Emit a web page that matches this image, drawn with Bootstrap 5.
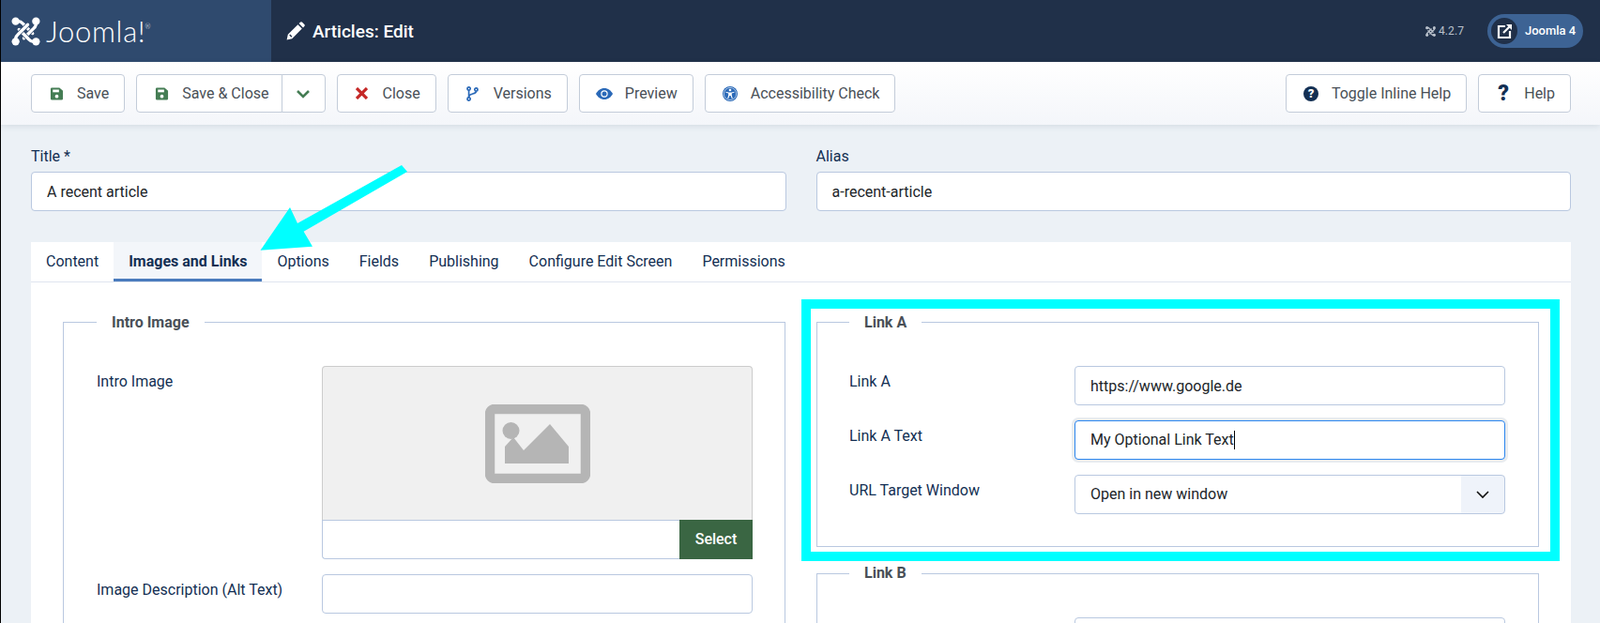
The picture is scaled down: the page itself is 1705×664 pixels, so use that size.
<!DOCTYPE html>
<html lang="en">
  <head>
    <meta charset="UTF-8" />
    <meta name="viewport" content="width=device-width, initial-scale=1.0" />
    <title>Articles: Edit</title>
    <link
      href="https://cdn.jsdelivr.net/npm/bootstrap@5.3.2/dist/css/bootstrap.min.css"
      rel="stylesheet"
    />
    <style>
      html, body { height: 664px; overflow: hidden; }
      body {
        position: relative;
        border-left: 1px solid #000;
        background: #ecf1f6;
        font-family: Roboto, "Liberation Sans", sans-serif;
        font-size: 16px;
        color: #132f53;
      }

      /* header */
      .top-bar { height: 66px; background: #203049; color: #fff; }
      .brand-box { width: 288px; background: #2f4a6e; padding-left: 11px; }
      .brand-name { font-family: Lato, sans-serif; font-weight: 300; font-size: 31px; line-height: 1; margin-left: 6px; letter-spacing: .7px; }
      .brand-name sup { font-size: 7px; top: -1.9em; letter-spacing: 0; margin-left: -1px; }
      .page-title { font-size: 19px; font-weight: 500; margin: 0 0 0 8px; line-height: 1; }
      .title-box { padding-left: 16px; }
      .ver-info { font-size: 12px; color: #b9c1cc; margin-right: 25px; gap: 3px; letter-spacing: .1px; }
      .site-pill { width: 102px; height: 36px; border-radius: 18px; background: #3d6394; padding-left: 4px; margin-right: 18px; font-size: 13px; font-weight: 500; color: #fff; }
      .site-pill-ico { width: 28px; height: 28px; border-radius: 50%; background: #203049; margin-right: 8px; }

      /* toolbar */
      .tool-bar {
        height: 67px;
        padding: 13px 31px 0 32px;
        background: linear-gradient(#fff, #f4f6fa);
        box-shadow: 0 2px 6px rgba(60, 80, 110, .12);
        position: relative;
      }
      .tool-group { gap: 12px; }
      .tool-btn {
        height: 41px;
        display: inline-flex;
        align-items: center;
        padding: 0 16px 0 0;
        border: 1px solid #c3ccd9;
        border-radius: 4px;
        background: #fff;
        color: #495057;
        font-size: 16px;
        line-height: 1;
      }
      .tool-main { padding-right: 13px; }
      .tool-ico { width: 32px; margin-left: 10px; margin-right: 6px; display: flex; justify-content: center; align-items: center; }
      .tool-caret { width: 47px; padding: 0; justify-content: center; }
      .round-q { width: 16px; height: 16px; border-radius: 50%; background: #132f53; color: #fff; font-size: 13px; font-weight: 900; line-height: 16px; text-align: center; }
      .big-q { font-size: 23px; font-weight: 900; color: #132f53; line-height: 1; }

      /* form */
      .main-area { padding: 21.7px 31px 0 32px; }
      .head-row { --bs-gutter-x: 32px; }
      .fld-label { margin: 0 0 4.6px; line-height: 24px; color: #132f53; }
      .fld-input, .fld-select {
        height: 41.7px;
        padding: 0 16px;
        border: 1px solid #b9c8e0;
        border-radius: 4px;
        color: #212529;
        font-size: 16px;
      }
      .fld-focus { display: flex; align-items: center; border-color: #2a85ee; box-shadow: 0 0 0 3px #e9ecef; }
      .fake-caret { border-right: 1px solid #000; height: 20px; display: inline-block; line-height: 20px; }
      .fld-select {
        background: url("data:image/svg+xml,%3csvg xmlns='http://www.w3.org/2000/svg' viewBox='0 0 16 16'%3e%3cpath fill='none' stroke='%23111' stroke-width='1.6' d='M2 5l6 6 6-6'/%3e%3c/svg%3e") no-repeat right 15px center / 16px 16px,
          linear-gradient(#eff3fa, #eff3fa) no-repeat right / 46px 100%, #fff;
      }
      .edit-card { margin-top: 32.7px; background: #fff; }
      .tab-list { height: 43px; border-bottom: 1px solid #dfe5ef; }
      .tab-link { height: 42px; padding: 0 16px; display: flex; align-items: center; color: #132f53; }
      .tab-link:hover { color: #132f53; }
      .tab-on { background: #f3f6fa; font-weight: 700; border-bottom: 3px solid #4a7bbd; padding-top: 3px; }
      .tab-body { padding: 31px 34px 0; }
      .fs-row { --bs-gutter-x: 33px; }
      .fs-box { border: 1px solid #b9c8e0; padding: 0 34px 34px; margin: 0; min-width: 0; }
      .fs-legend { float: none; width: auto; margin: 0; padding: 0 16px; font-size: 16px; line-height: 24px; font-weight: 700; color: #495057; }
      .fs-first { padding-top: 34.5px; }
      .fs-next { margin-top: 16.6px; }
      .fs-left { height: 400px; padding-left: 35px; }
      .form-line { display: flex; margin-bottom: 16.3px; }
      .form-line:last-child { margin-bottom: 0; }
      .line-label { width: 240px; flex: none; margin: 0; padding-top: 4.7px; line-height: 24px; color: #132f53; }
      .line-ctl { width: 459px; flex: none; }
      .media-view { height: 164.3px; background: #f0f0f0; border: 1px solid #ccc; border-bottom: 0; border-radius: 4px 4px 0 0; }
      .media-pick { display: flex; }
      .media-pick .fld-input { flex: 1; border-right: 0; border-radius: 0 0 0 4px; }
      .pick-btn { width: 78px; height: 41.7px; padding: 0; border: 0; border-radius: 0; background: #3a6643; color: #fff; font-size: 16px; font-weight: 500; }
      .pick-btn:hover { background: #3a6643; color: #fff; }

      /* annotation layer */
      .note-layer { position: absolute; left: -1px; top: 0; width: 1705px; height: 664px; pointer-events: none; }
    </style>
  </head>
  <body>
    <header class="top-bar d-flex">
      <div class="brand-box d-flex align-items-center">
        <svg width="31" height="31" viewBox="0 0 30 30">
          <g id="jl-piece" fill="none" stroke-linecap="round">
            <path d="M5 5C9 3 11 6 13 8L22 17" stroke="#2f4a6e" stroke-width="4.600" />
            <path d="M5 5C9 3 11 6 13 8L22 17" stroke="#fff" stroke-width="3.200" />
            <circle cx="4.500" cy="4.500" r="4" fill="#fff" />
          </g>
          <use href="#jl-piece" transform="rotate(90 15 15)" />
          <use href="#jl-piece" transform="rotate(180 15 15)" />
          <use href="#jl-piece" transform="rotate(270 15 15)" />
        </svg>
        <span class="brand-name">Joomla!<sup>®</sup></span>
      </div>
      <div class="title-box flex-grow-1 d-flex align-items-center">
        <svg width="20" height="20" viewBox="0 0 20 20" fill="#fff">
          <path d="M.6 19.4l1.2-5.6L12.4 3.2l4.4 4.4L6.2 18.2zM3.2 14.6l2.2 2.2 1-1-2.2-2.2z" />
          <path d="M13.6 2l1.3-1.3a1.6 1.6 0 0 1 2.2 0l2.2 2.2a1.6 1.6 0 0 1 0 2.2L18 6.4z" />
        </svg>
        <h1 class="page-title">Articles: Edit</h1>
      </div>
      <div class="ver-info d-flex align-items-center">
        <svg width="11" height="11" viewBox="0 0 30 30" fill="none" stroke="#b9c1cc" stroke-width="3.500" stroke-linecap="round">
          <path d="M5 5L9 4L22 17M25 5L26 9L13 22M25 25L21 26L8 13M5 25L4 21L17 8" />
          <g fill="#b9c1cc" stroke="none">
            <circle cx="4.500" cy="4.500" r="4.200" /><circle cx="25.500" cy="4.500" r="4.200" /><circle cx="4.500" cy="25.500" r="4.200" /><circle cx="25.500" cy="25.500" r="4.200" />
          </g>
        </svg>
        <span>4.2.7</span>
      </div>
      <div class="d-flex align-items-center">
        <a class="site-pill d-flex align-items-center text-decoration-none" href="#">
          <span class="site-pill-ico d-flex align-items-center justify-content-center">
            <svg width="17" height="17" viewBox="0 0 17 17" fill="none" stroke="#fff" stroke-width="2.2">
              <path d="M9 3H2v12h12V8" />
              <path d="M7 10l8-8" />
              <path d="M10 1h6v6" fill="#fff" stroke="none" />
            </svg>
          </span>
          Joomla 4
        </a>
      </div>
    </header>

    <div class="tool-bar d-flex justify-content-between">
      <div class="d-flex tool-group">
        <button class="btn tool-btn" type="button">
          <span class="tool-ico">
            <svg width="15" height="16" viewBox="0 0 16 16"><path fill="#457d54" d="M2.5 1H11l4 3.5v9A1.5 1.5 0 0 1 13.500 15h-11A1.500 1.500 0 0 1 1 13.500v-11A1.500 1.500 0 0 1 2.500 1z" /><rect x="3.500" y="3.200" width="7" height="3" fill="#fff" /><circle cx="8" cy="10.800" r="2" fill="#fff" /></svg>
          </span>
          Save
        </button>
        <div class="btn-group">
          <button class="btn tool-btn tool-main" type="button">
            <span class="tool-ico">
              <svg width="15" height="16" viewBox="0 0 16 16"><path fill="#457d54" d="M2.5 1H11l4 3.5v9A1.5 1.5 0 0 1 13.500 15h-11A1.500 1.500 0 0 1 1 13.500v-11A1.500 1.500 0 0 1 2.500 1z" /><rect x="3.500" y="3.200" width="7" height="3" fill="#fff" /><circle cx="8" cy="10.800" r="2" fill="#fff" /></svg>
            </span>
            Save &amp; Close
          </button>
          <button class="btn tool-btn tool-caret" type="button">
            <svg width="14" height="10" viewBox="0 0 14 10" fill="none" stroke="#457d54" stroke-width="2.6"><path d="M1 2l6 6 6-6" /></svg>
          </button>
        </div>
        <button class="btn tool-btn" type="button">
          <span class="tool-ico">
            <svg width="13" height="13" viewBox="0 0 13 13" fill="none" stroke="#c52827" stroke-width="3.200"><path d="M1 1l11 11M12 1L1 12" /></svg>
          </span>
          Close
        </button>
        <button class="btn tool-btn" type="button">
          <span class="tool-ico">
            <svg width="13" height="16" viewBox="0 0 13 16" fill="none" stroke="#2a69b8" stroke-width="1.700"><circle cx="2.600" cy="2.500" r="1.600" /><circle cx="2.600" cy="13.500" r="1.600" /><circle cx="10.400" cy="3.500" r="1.600" /><path d="M2.600 4v8M10.400 5.200c0 3.800-7.800 1.800-7.800 6" /></svg>
          </span>
          Versions
        </button>
        <button class="btn tool-btn" type="button">
          <span class="tool-ico">
            <svg width="18" height="12" viewBox="0 0 18 12"><path fill="#2a69b8" d="M9 0c4 0 7.200 2.600 9 6-1.800 3.400-5 6-9 6S1.800 9.400 0 6c1.800-3.400 5-6 9-6z" /><circle cx="9" cy="6" r="3.700" fill="#fff" /><circle cx="9" cy="6" r="2.500" fill="#2a69b8" /></svg>
          </span>
          Preview
        </button>
        <button class="btn tool-btn" type="button">
          <span class="tool-ico">
            <svg width="16" height="16" viewBox="0 0 16 16"><circle cx="8" cy="8" r="8" fill="#2a69b8" /><circle cx="8" cy="8" r="6.600" fill="none" stroke="#fff" stroke-width=".6" /><circle cx="8" cy="4" r="1.300" fill="#fff" /><path fill="#fff" d="M3.500 5.700l3.100.7h2.800l3.100-.7.200.9-2.900.9v2.100l1 3.400-.9.200L8.600 10h-1.200l-1.300 3.200-.9-.2 1-3.400V7.500l-2.900-.9z" /></svg>
          </span>
          Accessibility Check
        </button>
      </div>
      <div class="d-flex tool-group">
        <button class="btn tool-btn" type="button">
          <span class="tool-ico"><span class="round-q">?</span></span>
          Toggle Inline Help
        </button>
        <button class="btn tool-btn" type="button">
          <span class="tool-ico"><span class="big-q">?</span></span>
          Help
        </button>
      </div>
    </div>

    <main class="main-area">
      <div class="row head-row">
        <div class="col-6">
          <label class="fld-label d-block" for="jform_title">Title *</label>
          <input class="form-control fld-input" id="jform_title" type="text" value="A recent article" />
        </div>
        <div class="col-6">
          <label class="fld-label d-block" for="jform_alias">Alias</label>
          <input class="form-control fld-input" id="jform_alias" type="text" value="a-recent-article" />
        </div>
      </div>

      <div class="edit-card">
        <ul class="nav tab-list">
          <li class="nav-item"><a class="tab-link text-decoration-none" href="#">Content</a></li>
          <li class="nav-item"><a class="tab-link tab-on text-decoration-none" href="#">Images and Links</a></li>
          <li class="nav-item"><a class="tab-link text-decoration-none" href="#">Options</a></li>
          <li class="nav-item"><a class="tab-link text-decoration-none" href="#">Fields</a></li>
          <li class="nav-item"><a class="tab-link text-decoration-none" href="#">Publishing</a></li>
          <li class="nav-item"><a class="tab-link text-decoration-none" href="#">Configure Edit Screen</a></li>
          <li class="nav-item"><a class="tab-link text-decoration-none" href="#">Permissions</a></li>
        </ul>
        <div class="tab-body">
          <div class="row fs-row">
            <div class="col-6">
              <fieldset class="fs-box fs-left">
                <legend class="fs-legend">Intro Image</legend>
                <div class="fs-first">
                  <div class="form-line">
                    <label class="line-label">Intro Image</label>
                    <div class="line-ctl">
                      <div class="media-view d-flex align-items-center justify-content-center">
                        <svg width="112" height="84" viewBox="0 0 112 84">
                          <rect x="5" y="5" width="102" height="74" rx="5" fill="none" stroke="#b5b5b5" stroke-width="10.500" />
                          <ellipse cx="27.500" cy="28" rx="9" ry="9" fill="#b5b5b5" />
                          <path fill="#b5b5b5" d="M21 63V45l9-10 11 14 28-28 20 24v18z" />
                        </svg>
                      </div>
                      <div class="media-pick">
                        <input class="form-control fld-input" type="text" />
                        <button class="btn pick-btn" type="button">Select</button>
                      </div>
                    </div>
                  </div>
                  <div class="form-line">
                    <label class="line-label">Image Description (Alt Text)</label>
                    <div class="line-ctl"><input class="form-control fld-input" type="text" /></div>
                  </div>
                </div>
              </fieldset>
            </div>
            <div class="col-6">
              <fieldset class="fs-box">
                <legend class="fs-legend">Link A</legend>
                <div class="fs-first">
                  <div class="form-line">
                    <label class="line-label">Link A</label>
                    <div class="line-ctl"><input class="form-control fld-input" type="text" value="https://www.google.de" /></div>
                  </div>
                  <div class="form-line">
                    <label class="line-label">Link A Text</label>
                    <div class="line-ctl"><div class="form-control fld-input fld-focus"><span class="fake-caret">My Optional Link Text</span></div></div>
                  </div>
                  <div class="form-line">
                    <label class="line-label">URL Target Window</label>
                    <div class="line-ctl">
                      <select class="form-select fld-select">
                        <option>Open in new window</option>
                      </select>
                    </div>
                  </div>
                </div>
              </fieldset>
              <fieldset class="fs-box fs-next">
                <legend class="fs-legend">Link B</legend>
                <div class="fs-first">
                  <div class="form-line">
                    <div class="line-label"></div>
                    <div class="line-ctl"><input class="form-control fld-input" type="text" /></div>
                  </div>
                </div>
              </fieldset>
            </div>
          </div>
        </div>
      </div>
    </main>

    <!-- arrow and frame drawn on top of the screenshot -->
    <svg class="note-layer" viewBox="0 0 1705 664">
      <polygon fill="#00ffff" points="428,176 434,183 323.600,246.700 333,262.700 277.500,266.700 309,221 317,238" />
      <rect x="859" y="324" width="798" height="269" fill="none" stroke="#00ffff" stroke-width="10" />
    </svg>

    <script src="https://cdn.jsdelivr.net/npm/bootstrap@5.3.2/dist/js/bootstrap.bundle.min.js"></script>
  </body>
</html>
